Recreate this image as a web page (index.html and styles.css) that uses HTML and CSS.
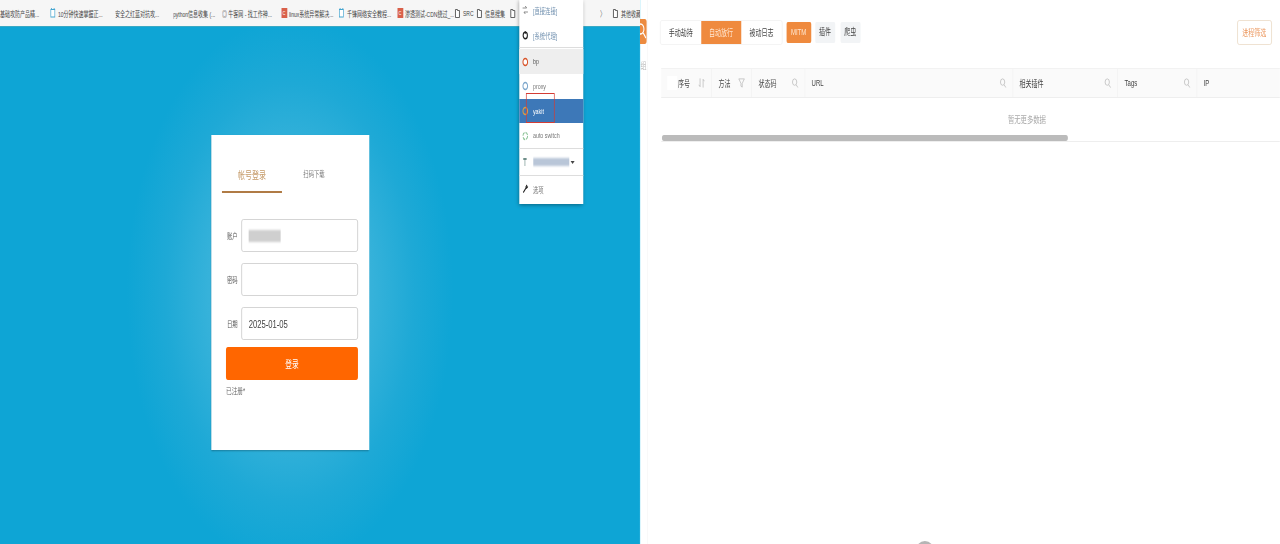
FILE: index.html
```html
<!DOCTYPE html>
<html lang="zh-CN">
<head>
    <meta charset="utf-8">
    <title>登录 / MITM</title>
    <link rel="stylesheet" href="styles.css">
</head>
<body>
    <div class="frame">
    <div class="screens">
        <section class="browser">
            <div class="bookmarks">
                <div class="mark"><span class="mark-text">基础攻防产品精...</span></div>
                <div class="mark"><svg class="mark-icon" viewBox="0 0 8 10"><rect x="1" y="1.5" width="6" height="7.5" fill="#fff" stroke="#45a5d0"/><path d="M2 0v2M6 0v2" stroke="#45a5d0"/></svg><span class="mark-text">10分钟快速掌握正...</span></div>
                <div class="mark"><span class="mark-text">安全之红蓝对抗攻...</span></div>
                <div class="mark"><span class="mark-text">python信息收集 (...</span></div>
                <div class="mark"><span class="mark-text">◎ 牛客网 - 找工作神...</span></div>
                <div class="mark"><span class="mark-badge">C</span><span class="mark-text">linux系统异常解决...</span></div>
                <div class="mark"><svg class="mark-icon" viewBox="0 0 8 10"><rect x="1" y="1.5" width="6" height="7.5" fill="#fff" stroke="#45a5d0"/><path d="M2 0v2M6 0v2" stroke="#45a5d0"/></svg><span class="mark-text">千锋网络安全教程...</span></div>
                <div class="mark"><span class="mark-badge">C</span><span class="mark-text">渗透测试-CDN绕过_...</span></div>
                <div class="mark"><svg class="mark-icon" viewBox="0 0 8 10"><path d="M1 1.5h3v1h3v7H1z" fill="#fff" stroke="#444"/></svg><span class="mark-text">SRC</span></div>
                <div class="mark"><svg class="mark-icon" viewBox="0 0 8 10"><path d="M1 1.5h3v1h3v7H1z" fill="#fff" stroke="#444"/></svg><span class="mark-text">信息搜集</span></div>
                <div class="mark"><svg class="mark-icon" viewBox="0 0 8 10"><path d="M1 1.5h3v1h3v7H1z" fill="#fff" stroke="#444"/></svg></div>
                <div class="mark mark-more">〉</div>
                <div class="mark"><svg class="mark-icon" viewBox="0 0 8 10"><path d="M1 1.5h3v1h3v7H1z" fill="#fff" stroke="#444"/></svg><span class="mark-text">其他收藏</span></div>
            </div>

            <div class="login-bg">
                <div class="login-card">
                    <div class="login-tabs">
                        <div class="login-tab active">帐号登录</div>
                        <div class="login-tab">扫码下载</div>
                    </div>
                    <form class="login-form">
                        <div class="field">
                            <label class="field-label">账户</label>
                            <div class="field-input"><span class="smudge"></span></div>
                        </div>
                        <div class="field">
                            <label class="field-label">密码</label>
                            <div class="field-input"></div>
                        </div>
                        <div class="field">
                            <label class="field-label">日期</label>
                            <div class="field-input">2025-01-05</div>
                        </div>
                        <button class="login-button" type="button">登录</button>
                        <div class="login-note">已注册*</div>
                    </form>
                </div>
            </div>

            <div class="proxy-menu">
                <div class="menu-row menu-first">
                    <svg class="menu-icon" viewBox="0 0 10 10"><path d="M1 3h6M5 1l2 2M9 7H3M5 9L3 7" fill="none" stroke="#777"/></svg>
                    <span class="menu-link">[直接连接]</span>
                </div>
                <div class="menu-row menu-last">
                    <svg class="menu-icon" viewBox="0 0 10 10"><circle cx="5" cy="5.500" r="3.200" fill="none" stroke="#222" stroke-width="1.600"/><path d="M5 1v3" stroke="#222"/></svg>
                    <span class="menu-link">[系统代理]</span>
                </div>
                <div class="menu-row hovered">
                    <svg class="menu-icon" viewBox="0 0 10 10"><circle cx="5" cy="5" r="3.500" fill="#fff" stroke="#d8562c" stroke-width="1.500"/></svg>
                    <span>bp</span>
                </div>
                <div class="menu-row">
                    <svg class="menu-icon" viewBox="0 0 10 10"><circle cx="5" cy="5" r="3.500" fill="#fff" stroke="#7fa8cc" stroke-width="1.500"/></svg>
                    <span>proxy</span>
                </div>
                <div class="menu-row selected">
                    <svg class="menu-icon" viewBox="0 0 10 10"><circle cx="5" cy="5" r="3.500" fill="#3d78b8" stroke="#d99a45" stroke-width="1.500"/></svg>
                    <span>yakit</span>
                </div>
                <div class="menu-row menu-last">
                    <svg class="menu-icon" viewBox="0 0 10 10"><circle cx="5" cy="5" r="3.500" fill="none" stroke="#8fc59a" stroke-width="1.500" stroke-dasharray="4 1.500"/></svg>
                    <span>auto switch</span>
                </div>
                <div class="menu-row menu-last">
                    <svg class="menu-icon" viewBox="0 0 10 10"><path d="M2 1h5v2H5v6H4V3H2z" fill="#6f8f8a"/></svg>
                    <span class="smudge smudge-menu"></span><span class="caret"></span>
                </div>
                <div class="menu-row">
                    <svg class="menu-icon" viewBox="0 0 10 10"><path d="M7.500 1 6 3l1 1 2-1.500M6.500 3.500 2 8.500" fill="none" stroke="#222" stroke-width="1.400"/></svg>
                    <span>选项</span>
                </div>
                <div class="red-box"></div>
            </div>
        </section>

        <section class="mitm">
            <aside class="side">
                <div class="side-tab">
                    <svg class="side-icon" viewBox="0 0 10 25"><circle cx="1" cy="10" r="5" fill="none" stroke="#fff" stroke-width="1.500"/><path d="M5 14l4 5" stroke="#fff" stroke-width="1.500"/></svg>
                </div>
                <div class="side-text">组</div>
            </aside>
            <div class="mitm-main">
                <div class="toolbar">
                    <div class="segment">
                        <div class="seg-item">手动劫持</div>
                        <div class="seg-item active">自动放行</div>
                        <div class="seg-item">被动日志</div>
                    </div>
                    <div class="pill active">MITM</div>
                    <div class="pill">插件</div>
                    <div class="pill pill-last">爬虫</div>
                    <button class="filter-button" type="button">进程筛选</button>
                </div>

                <div class="table">
                    <div class="thead">
                        <div class="th"><span class="check"></span><span class="th-name">序号</span>
                            <svg class="th-icon" viewBox="0 0 12 12"><path d="M3.500 1v9M3.500 10 1.500 8M8.500 11V2M8.500 2l2 2" fill="none" stroke="#bbb"/></svg>
                        </div>
                        <div class="th"><span class="th-name">方法</span>
                            <svg class="th-icon" viewBox="0 0 12 12"><path d="M1.500 1.500h9L7 6.500V10.500L5 9.500V6.500z" fill="none" stroke="#bbb"/></svg>
                        </div>
                        <div class="th"><span class="th-name">状态码</span>
                            <svg class="th-icon" viewBox="0 0 12 12"><circle cx="5.500" cy="5" r="3.500" fill="none" stroke="#bbb"/><path d="M8 8l3 3" stroke="#bbb"/></svg>
                        </div>
                        <div class="th"><span class="th-name">URL</span>
                            <svg class="th-icon" viewBox="0 0 12 12"><circle cx="5.500" cy="5" r="3.500" fill="none" stroke="#bbb"/><path d="M8 8l3 3" stroke="#bbb"/></svg>
                        </div>
                        <div class="th"><span class="th-name">相关插件</span>
                            <svg class="th-icon" viewBox="0 0 12 12"><circle cx="5.500" cy="5" r="3.500" fill="none" stroke="#bbb"/><path d="M8 8l3 3" stroke="#bbb"/></svg>
                        </div>
                        <div class="th"><span class="th-name">Tags</span>
                            <svg class="th-icon" viewBox="0 0 12 12"><circle cx="5.500" cy="5" r="3.500" fill="none" stroke="#bbb"/><path d="M8 8l3 3" stroke="#bbb"/></svg>
                        </div>
                        <div class="th"><span class="th-name">IP</span></div>
                    </div>
                    <div class="tbody">
                        <div class="empty">暂无更多数据</div>
                        <div class="scrollbar"></div>
                    </div>
                </div>
            </div>
            <div class="spinner"></div>
        </section>
    </div>
    </div>
</body>
</html>
```

FILE: styles.css
```css
html, body {
    margin: 0;
    height: 100%;
    overflow: hidden;
    background-color: #fff;
}

body {
    font-family: "Liberation Sans", "Noto Sans CJK SC", sans-serif;
    color: #333;
}

.frame {
    width: 1280px;
    height: 544px;
    overflow: hidden;
}

/* the picture is two 960px wide screenshots squeezed to fit side by side */
.screens {
    display: flex;
    width: 1920px;
    height: 544px;
    transform: scaleX(0.6666);
    transform-origin: 0 0;
    filter: blur(0.45px);
}

/* left half: browser with the login page */
.browser {
    position: relative;
    width: 960px;
    flex-shrink: 0;
    display: flex;
    flex-direction: column;
}

.bookmarks {
    height: 26px;
    display: grid;
    grid-template-columns: 73.5px 99px 87px 73.5px 88.5px 85.5px 88.5px 85.5px 33px 49.5px 136.5px 18px 42px;
    align-items: center;
    background-color: #f6f6f6;
    font-size: 7.5px;
    white-space: nowrap;
    overflow: hidden;
    box-sizing: border-box;
}

.mark {
    display: flex;
    align-items: center;
    gap: 3px;
    overflow: hidden;
    color: #444;
}

.mark-icon {
    width: 10.5px;
    height: 10px;
    flex-shrink: 0;
}

.mark-badge {
    width: 9px;
    height: 10px;
    flex-shrink: 0;
    background-color: #d9604a;
    color: #fff;
    font-size: 6px;
    line-height: 10px;
    text-align: center;
}

.mark-more {
    font-size: 8px;
    color: #666;
}

.login-bg {
    flex: 1;
    padding: 109px 0 0 316.5px;
    box-sizing: border-box;
    border-top: 1px solid #3aa9c4;
    background: radial-gradient(ellipse 245px 275px at 435px 265px, #45b9de 0%, #36b2da 50%, #1ea9d6 76%, #0ea5d5 100%);
}

.login-card {
    width: 237px;
    height: 315px;
    margin-top: -1px;
    background-color: #fff;
    box-shadow: 0 1px 2px rgba(0, 0, 0, 0.3);
    padding: 0 16.5px 0 22.5px;
    box-sizing: border-box;
}

.login-tabs {
    display: flex;
    margin-left: -6px;
    padding-top: 31px;
    height: 27px;
}

.login-tab {
    width: 90px;
    height: 27px;
    margin-right: 3px;
    box-sizing: border-box;
    text-align: center;
    font-size: 8px;
    line-height: 18px;
    color: #777;
}

.login-tab.active {
    font-size: 10.5px;
    color: #c59a68;
    border-bottom: 2px solid #b07b45;
}

.login-form {
    margin-top: 26px;
}

.field {
    display: flex;
    align-items: center;
    gap: 4.5px;
    margin-bottom: 11px;
    padding-left: 1.5px;
}

.field-label {
    width: 16.5px;
    font-size: 8px;
    white-space: nowrap;
    color: #555;
}

.field-input {
    width: 175.5px;
    height: 33px;
    box-sizing: border-box;
    border: 1px solid #ccc;
    border-radius: 3px;
    padding-left: 10.5px;
    display: flex;
    align-items: center;
    font-size: 11.5px;
    color: #444;
}

.smudge {
    display: block;
    width: 48px;
    height: 12px;
    background-color: #cfcfcf;
    filter: blur(1px);
}

.login-button {
    display: block;
    width: 198px;
    height: 33px;
    margin-top: -4px;
    border: none;
    border-radius: 3px;
    background-color: #ff6600;
    color: #fff;
    font-family: inherit;
    font-size: 10px;
}

.login-note {
    margin-top: 4px;
    font-size: 8.5px;
    color: #666;
}

/* extension popup sits over the browser window */
.proxy-menu {
    position: absolute;
    left: 778.5px;
    top: 0;
    width: 96px;
    height: 204px;
    background-color: #fff;
    box-shadow: 0 1px 5px rgba(0, 0, 0, 0.4);
    font-size: 8px;
    color: #777;
}

.menu-row {
    display: flex;
    align-items: center;
    gap: 6px;
    height: 24.7px;
    padding-left: 3px;
    white-space: nowrap;
}

.menu-first {
    margin-top: -2px;
}

.menu-last {
    border-bottom: 1px solid #ddd;
    margin-bottom: 1px;
}

.menu-icon {
    width: 12px;
    height: 10px;
    flex-shrink: 0;
}

.menu-link {
    color: #6f8fae;
}

.menu-row.hovered {
    background-color: #eee;
    color: #555;
}

.menu-row.selected {
    background-color: #3d78b8;
    color: #fff;
}

.smudge-menu {
    width: 54px;
    height: 8px;
    background-color: #b9c6d8;
}

.caret {
    margin-left: -4px;
    border: 3px solid transparent;
    border-top: 3px solid #444;
    border-bottom: none;
}

.red-box {
    position: absolute;
    left: 10.5px;
    top: 93px;
    width: 40.5px;
    height: 28px;
    border: 1.5px solid #d43c34;
}

/* right half: MITM page */
.mitm {
    position: relative;
    flex: 1;
    display: flex;
    overflow: hidden;
}

.side {
    width: 12px;
    flex-shrink: 0;
    box-sizing: border-box;
    padding-top: 19px;
    border-left: 1.5px solid #c4eefa;
    border-right: 1px solid #f6f6f6;
}

.side-tab {
    width: 10px;
    height: 25px;
    margin-left: -1.5px;
    background-color: #ec8b40;
    border-radius: 0 3px 3px 0;
}

.side-icon {
    display: block;
    width: 10px;
    height: 25px;
}

.side-text {
    margin-top: 15px;
    font-size: 9px;
    color: #bbb;
}

.mitm-main {
    flex: 1;
    padding: 19px 0 0 18px;
    min-width: 0;
}

.toolbar {
    display: flex;
    align-items: center;
    gap: 6px;
    height: 26px;
    padding-right: 12px;
}

.segment {
    display: flex;
    height: 25px;
    box-sizing: border-box;
    border: 1px solid #f2f2f2;
    border-radius: 3px;
    font-size: 9px;
}

.seg-item {
    width: 60.5px;
    line-height: 25px;
    text-align: center;
    color: #444;
}

.seg-item.active {
    background-color: #ef8a3e;
    color: #ffe6d0;
}

.pill {
    height: 21px;
    padding: 0 6px;
    background-color: #f2f4f6;
    border-radius: 2px;
    font-size: 9px;
    line-height: 21px;
    color: #444;
}

.pill.active {
    padding: 0 7px;
    background-color: #ef8a3e;
    color: #ffe6d0;
}

.pill-last {
    margin-left: 2px;
}

.filter-button {
    margin-left: auto;
    width: 52.5px;
    height: 25px;
    padding: 0;
    background-color: #fff;
    border: 1px solid #ecdcc9;
    border-radius: 3px;
    font-family: inherit;
    font-size: 9px;
    color: #ec9a62;
}

.table {
    margin-top: 23px;
    margin-left: 1.5px;
}

.thead {
    display: grid;
    grid-template-columns: 76.5px 60px 79.5px 312px 157.5px 118.5px 1fr;
    height: 30px;
    background-color: #fafafa;
    border-top: 1px solid #f2f2f2;
    border-bottom: 1px solid #eee;
    box-sizing: border-box;
    font-size: 9px;
    color: #444;
}

.th {
    display: flex;
    align-items: center;
    padding: 0 9px 0 10px;
    border-right: 1px solid #f2f2f2;
    box-sizing: border-box;
}

.th:first-child {
    padding-left: 9px;
}

.th:last-child {
    border-right: none;
}

.th-name {
    flex: 1;
    white-space: nowrap;
}

.check {
    width: 15px;
    height: 14px;
    background-color: #fff;
    margin-right: 1.5px;
}

.th-icon {
    width: 11px;
    height: 12px;
    flex-shrink: 0;
}

.tbody {
    height: 44px;
    box-sizing: border-box;
    border-bottom: 1px solid #eee;
    padding-top: 14px;
}

.empty {
    padding-left: 520.5px;
    height: 23px;
    font-size: 9.5px;
    color: #aaa;
}

.scrollbar {
    width: 609px;
    height: 6px;
    background-color: #bbb;
    border-radius: 3px;
    margin-left: 1.5px;
}

/* loading ring cut off by the bottom edge */
.spinner {
    position: absolute;
    left: 411px;
    top: 541px;
    width: 33px;
    height: 30px;
    box-sizing: border-box;
    border: 3px solid #b5b5b5;
    border-radius: 50%;
}
```
